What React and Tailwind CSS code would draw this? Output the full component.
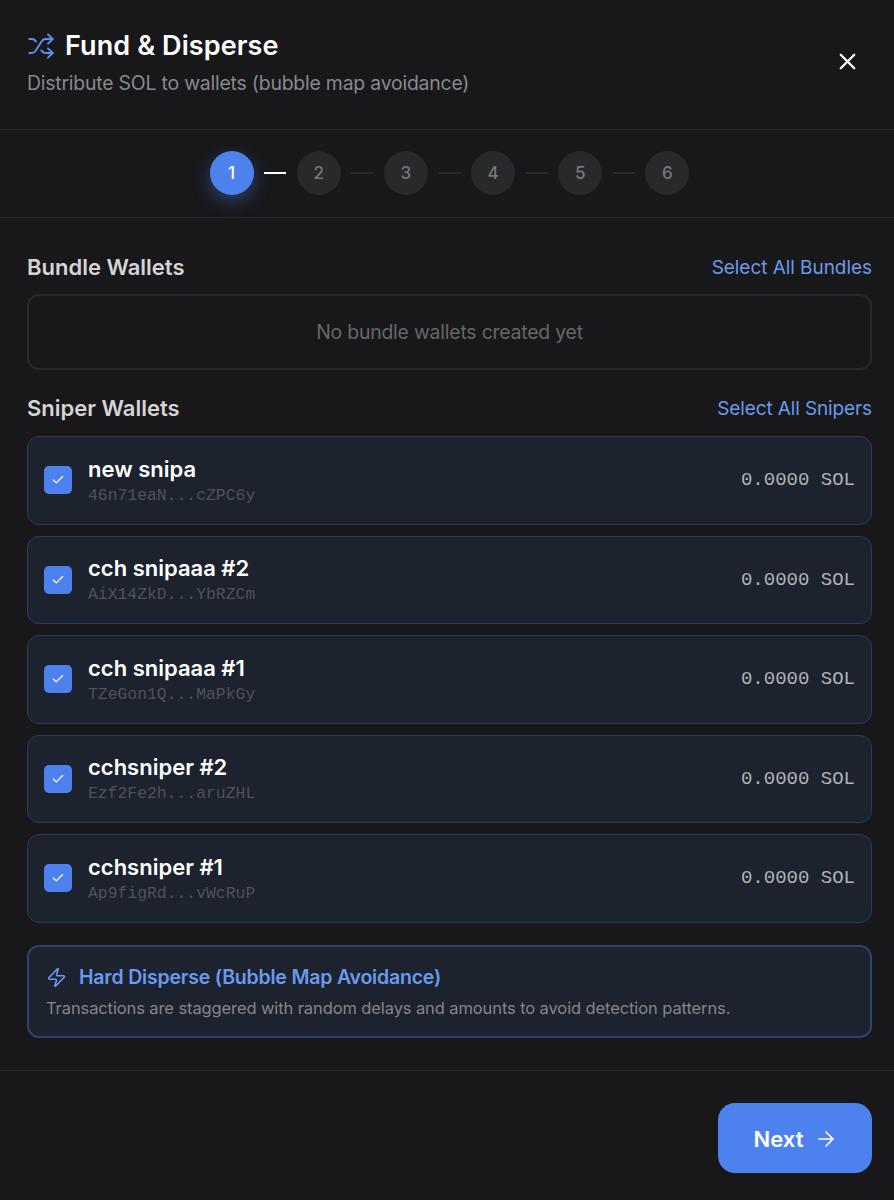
import React from 'react';
import { Shuffle, X, Check, Zap, ArrowRight } from 'lucide-react';

const steps = [1, 2, 3, 4, 5, 6];

const wallets = [
  { name: 'new snipa', address: '46n71eaN...cZPC6y' },
  { name: 'cch snipaaa #2', address: 'AiX14ZkD...YbRZCm' },
  { name: 'cch snipaaa #1', address: 'TZeGon1Q...MaPkGy' },
  { name: 'cchsniper #2', address: 'Ezf2Fe2h...aruZHL' },
  { name: 'cchsniper #1', address: 'Ap9figRd...vWcRuP' },
];

const Stepper = () => (
  <div className="flex h-[88px] items-center justify-center border-b border-[#26262a] pb-[2px] pl-[5px]">
    {steps.map((step, i) => (
      <React.Fragment key={step}>
        <div
          className={
            step === 1
              ? 'flex h-[44px] w-[44px] items-center justify-center rounded-full bg-[#4d82ee] pt-[2px] text-[17px] font-medium text-white shadow-[0_6px_18px_rgba(77,130,238,0.4)]'
              : 'flex h-[44px] w-[44px] items-center justify-center rounded-full bg-[#29292c] pt-[2px] text-[17px] font-medium text-[#77777b]'
          }
        >
          {step}
        </div>
        {i < steps.length - 1 && (
          <div className={i === 0 ? 'mx-[10.6px] h-[2px] w-[22px] bg-white' : 'mx-[10.6px] h-[2px] w-[22px] bg-[#29292c]'} />
        )}
      </React.Fragment>
    ))}
  </div>
);

const WalletRow = ({ wallet }) => (
  <div className="flex h-[88.5px] items-center rounded-[12px] border border-[#2b3a62] bg-[#1c222e] pl-[16px] pr-[16px]">
    <div className="flex h-[28px] w-[28px] items-center justify-center rounded-[5px] bg-[#4d82ee]">
      <Check size={14} strokeWidth={2} className="text-white" />
    </div>
    <div className="ml-[16px] flex flex-col pt-[1px]">
      <span className="text-[22px] font-semibold leading-[28px] text-white">{wallet.name}</span>
      <span className="mt-[2px] font-['Liberation_Mono',monospace] text-[16.4px] leading-[22px] text-[#4e525c]">{wallet.address}</span>
    </div>
    <span className="ml-auto font-['Liberation_Mono',monospace] text-[19px] text-[#b0b2b7]">0.0000 SOL</span>
  </div>
);

export default function App() {
  return (
    <div className="flex h-[1200px] w-[894px] flex-col overflow-hidden bg-[#18181a] font-['Inter',sans-serif]">
      <div className="flex h-[130px] items-start justify-between border-b border-[#26262a] pl-[27px] pr-[33.5px] pt-[28px]">
        <div>
          <div className="flex items-center gap-[10px]">
            <Shuffle size={28} strokeWidth={1.7} className="text-[#5b8fe8]" />
            <h1 className="text-[27px] font-semibold leading-[36px] tracking-[0.1px] text-white">Fund &amp; Disperse</h1>
          </div>
          <p className="mt-[5px] text-[19.4px] leading-[28px] tracking-[-0.2px] text-[#88888c]">Distribute SOL to wallets (bubble map avoidance)</p>
        </div>
        <button className="mt-[20px] text-white">
          <X size={27} strokeWidth={2} />
        </button>
      </div>

      <Stepper />

      <div className="flex flex-1 flex-col pl-[27px] pr-[22px]">
        <div className="mt-[31px] flex h-[36px] items-center justify-between">
          <h2 className="text-[22px] font-semibold text-[#d4d4d6]">Bundle Wallets</h2>
          <button className="pt-[2px] text-[19px] tracking-[-0.05px] text-[#6a9aec]">Select All Bundles</button>
        </div>
        <div className="mt-[9px] flex h-[76px] items-center justify-center rounded-[12px] border-2 border-[#29292c] pt-[2px] text-[19.4px] tracking-[-0.2px] text-[#66666a]">
          No bundle wallets created yet
        </div>

        <div className="mt-[20px] flex h-[36px] items-center justify-between">
          <h2 className="text-[22px] font-semibold text-[#d4d4d6]">Sniper Wallets</h2>
          <button className="pt-[2px] text-[19px] tracking-[-0.12px] text-[#6a9aec]">Select All Snipers</button>
        </div>
        <div className="mt-[10px] flex flex-col gap-[11px]">
          {wallets.map((wallet) => (
            <WalletRow key={wallet.address} wallet={wallet} />
          ))}
        </div>

        <div className="mt-[22px] h-[93px] rounded-[12px] border-2 border-[#2f4370] bg-[#1c222e] pl-[17px] pt-[16px]">
          <div className="flex items-center gap-[12px]">
            <Zap size={21} strokeWidth={1.8} className="text-[#6a9aec]" />
            <span className="text-[19.5px] font-semibold tracking-[-0.2px] text-[#6a9aec]">Hard Disperse (Bubble Map Avoidance)</span>
          </div>
          <p className="mt-[2px] text-[16.5px] leading-[28px] tracking-[-0.105px] text-[#85868b]">
            Transactions are staggered with random delays and amounts to avoid detection patterns.
          </p>
        </div>
      </div>

      <div className="flex h-[130px] items-start justify-end border-t border-[#26262a] pr-[22px] pt-[32px]">
        <button className="flex h-[70px] w-[154px] items-center justify-center gap-[11px] rounded-[17px] bg-[#4d82ee] pl-[2px] pt-[2px] text-[22px] font-semibold text-white">
          Next
          <ArrowRight size={24} strokeWidth={1.6} />
        </button>
      </div>
    </div>
  );
}
